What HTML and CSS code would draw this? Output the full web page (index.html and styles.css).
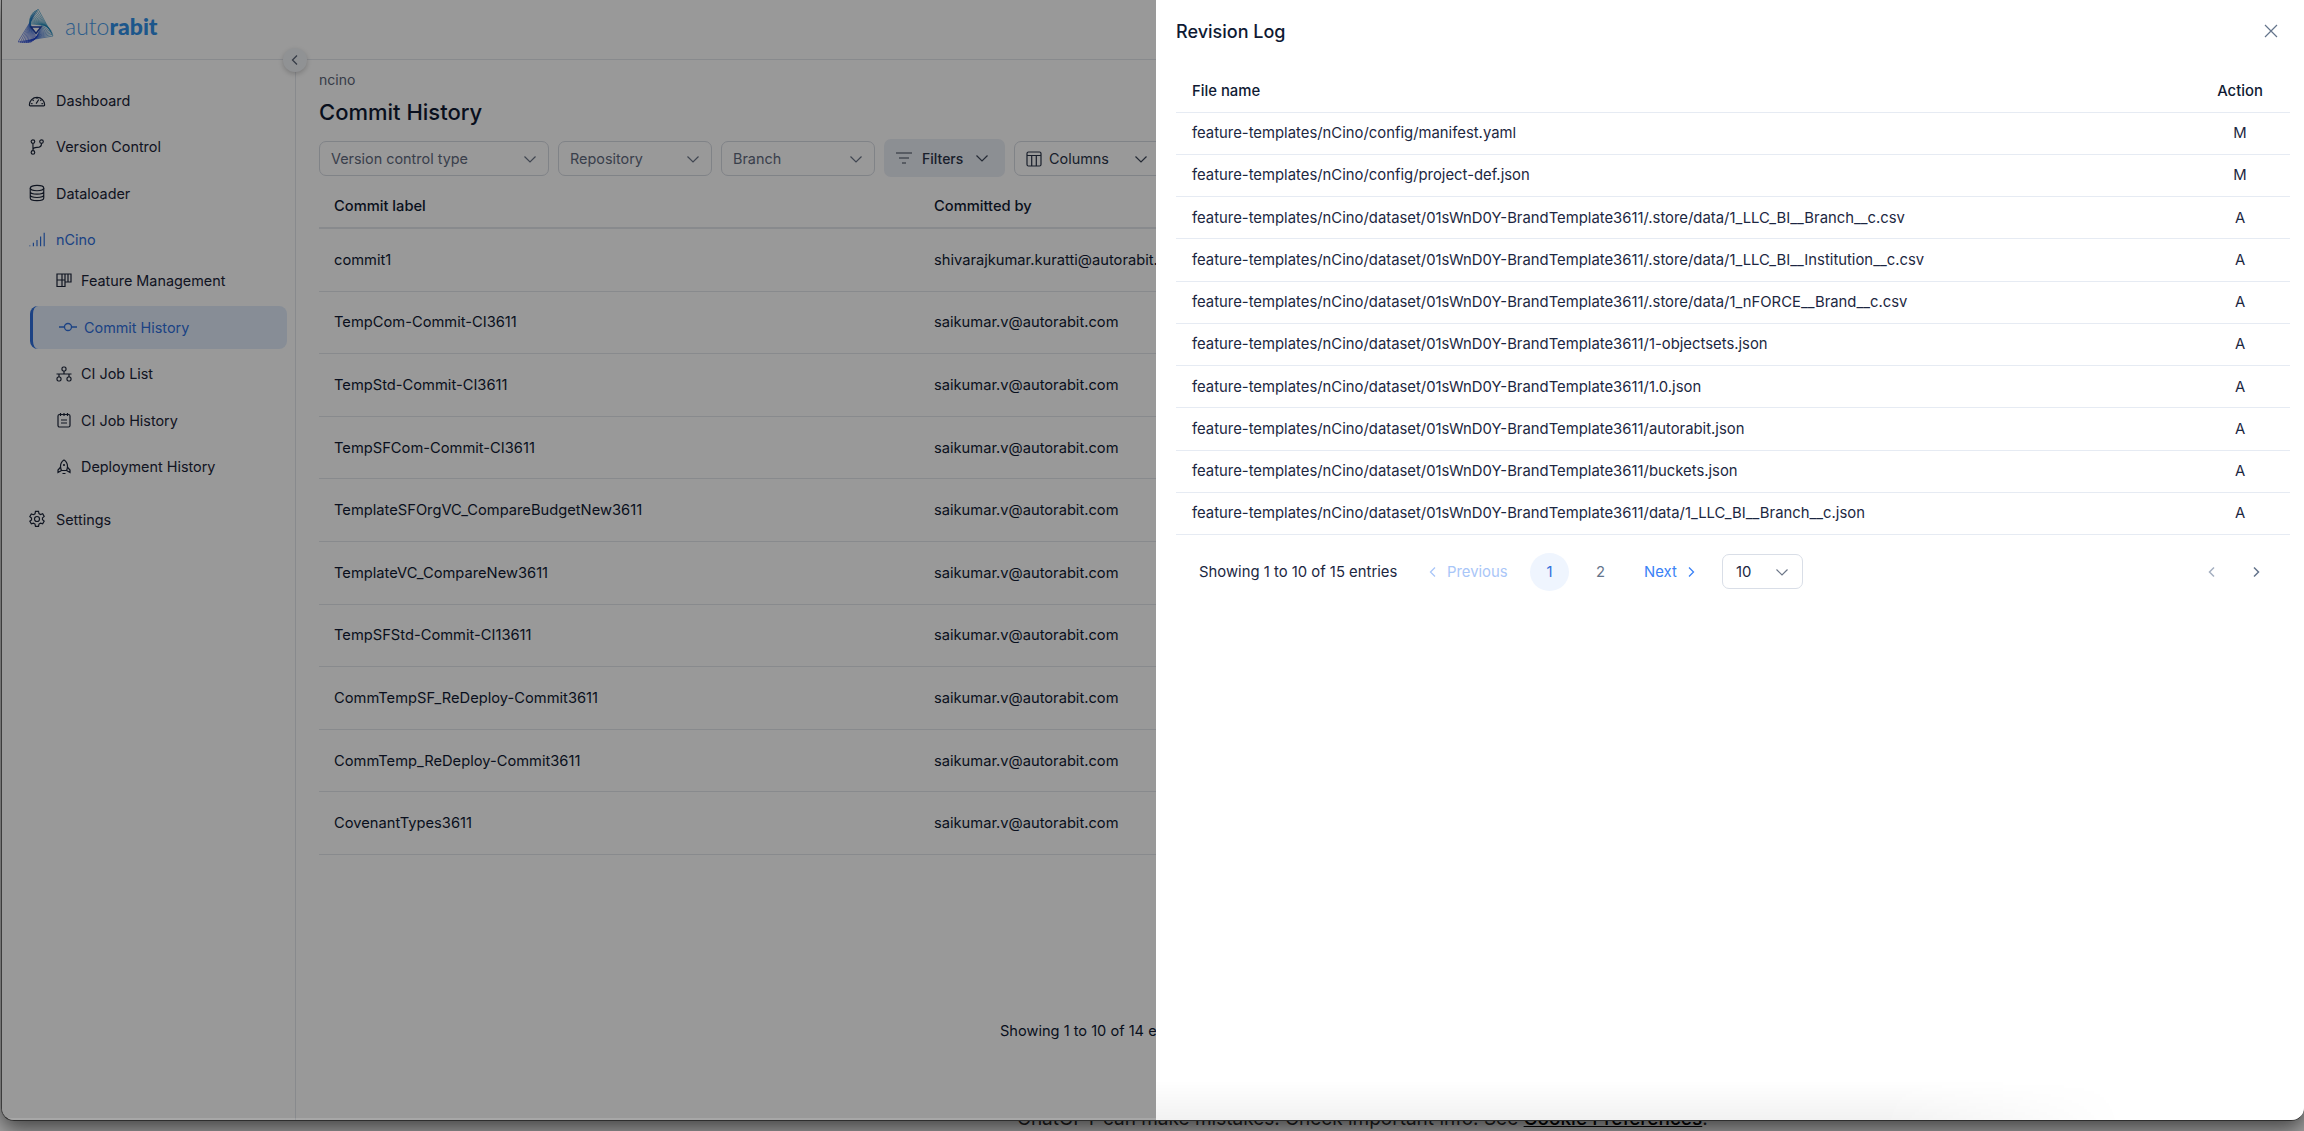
FILE: index.html
```html
<!DOCTYPE html>
<html lang="en">
<head>
<meta charset="utf-8">
<title>Revision Log</title>
<link rel="stylesheet" href="styles.css">
</head>
<body>
<div class="window">
  <div class="app">
    <header class="topbar">
      <div class="logo">
        <svg class="logo-mark" viewBox="-18 -20 36 34" fill="none">
          <defs><linearGradient id="lg" gradientUnits="userSpaceOnUse" x1="-16" y1="8" x2="16" y2="-10"><stop offset="0" stop-color="#1d3fd0"/><stop offset=".55" stop-color="#1d5fc8"/><stop offset="1" stop-color="#12a0a8"/></linearGradient></defs>
          <g class="spiral" stroke="url(#lg)">
            <polygon points="2,-20 17,7 -18,13"/>
            <polygon points="2,-20 17,7 -18,13" transform="rotate(-5) scale(.945)"/>
            <polygon points="2,-20 17,7 -18,13" transform="rotate(-10) scale(.89)"/>
            <polygon points="2,-20 17,7 -18,13" transform="rotate(-15) scale(.835)"/>
            <polygon points="2,-20 17,7 -18,13" transform="rotate(-20) scale(.78)"/>
            <polygon points="2,-20 17,7 -18,13" transform="rotate(-25) scale(.725)"/>
            <polygon points="2,-20 17,7 -18,13" transform="rotate(-30) scale(.67)"/>
            <polygon points="2,-20 17,7 -18,13" transform="rotate(-35) scale(.615)"/>
            <polygon points="2,-20 17,7 -18,13" transform="rotate(-40) scale(.56)"/>
            <polygon points="2,-20 17,7 -18,13" transform="rotate(-45) scale(.505)"/>
            <polygon points="2,-20 17,7 -18,13" transform="rotate(-50) scale(.45)"/>
            <polygon points="2,-20 17,7 -18,13" transform="rotate(-55) scale(.395)"/>
          </g>
          <polygon class="spiral-core" points="-5,-2 5,-2 0,4.500"/>
        </svg>
        <span class="logo-text">auto<b>rabit</b></span>
      </div>
    </header>
    <button class="collapse" aria-label="Collapse"><svg viewBox="0 0 16 16" class="i16" fill="none" stroke="#5b6577" stroke-width="1.3"><path d="M10 3.5 5.5 8l4.5 4.5"/></svg></button>
    <div class="body">
      <aside class="sidebar">
        <nav class="nav">
          <a class="nav-item"><svg class="ic" viewBox="0 0 20 20"><path d="M1.5 15.5a8.5 8.5 0 1 1 17 0 1 1 0 0 1-1 1h-15a1 1 0 0 1-1-1Z"/><path d="M10 7v2M5 9.5l1.3 1.3M15 9.5l-1.3 1.300M3.500 14h1.500M15 14h1.500M9 14l3-4.500"/></svg>Dashboard</a>
          <a class="nav-item"><svg class="ic" viewBox="0 0 20 20"><circle cx="5.500" cy="4" r="2"/><circle cx="5.500" cy="16" r="2"/><circle cx="15" cy="4" r="2"/><path d="M5.500 6v8M15 6c0 3.500-2 4.500-5 4.500-2.500 0-4.500 1-4.500 3"/></svg>Version Control</a>
          <a class="nav-item"><svg class="ic" viewBox="0 0 20 20"><ellipse cx="10" cy="4.500" rx="7.500" ry="3"/><path d="M2.500 4.500v11c0 1.700 3.400 3 7.500 3s7.500-1.300 7.500-3v-11M2.500 8.200c0 1.700 3.400 3 7.500 3s7.500-1.300 7.500-3M2.500 12c0 1.700 3.400 3 7.500 3s7.500-1.300 7.500-3"/></svg>Dataloader</a>
          <a class="nav-item nav-brand"><svg class="ic" viewBox="0 0 20 20"><path d="M2 17v-1M6 17v-4M10 17v-7M14 17V6M18 17V2"/></svg>nCino</a>
          <div class="subnav">
            <a class="sub-item"><svg class="ic-sm" viewBox="0 0 16 16"><path d="M1 2h14v8H9v4.500H1ZM6 2v12.500M1 8h8M9 2v8M12 2v8"/></svg>Feature Management</a>
            <a class="sub-item sub-active"><svg class="ic-commit" viewBox="0 0 20 12"><circle cx="10" cy="6" r="3.500"/><path d="M1 6h5.500M13.500 6H19"/></svg>Commit History</a>
            <a class="sub-item"><svg class="ic-sm" viewBox="0 0 16 16"><rect x="6" y="1" width="4" height="4" rx="1.500"/><rect x="1" y="11" width="4" height="4" rx="1.500"/><rect x="11" y="11" width="4" height="4" rx="1.500"/><path d="M8 5v3M.5 8h15M3 8v3M13 8v3"/></svg>CI Job List</a>
            <a class="sub-item"><svg class="ic-sm" viewBox="0 0 16 16"><rect x="2" y="2.500" width="12" height="12.500" rx="1.500"/><path d="M4.500 1v3M8 1v3M11.500 1v3M5 8h6M5 11h6"/></svg>CI Job History</a>
            <a class="sub-item"><svg class="ic-sm" viewBox="0 0 16 16"><path d="M8 1c2.500 1.500 3.500 4 3.500 6.500 0 1.500-.5 3-1 4h-5c-.5-1-1-2.500-1-4C4.500 5 5.500 2.500 8 1Z"/><path d="M4.700 8 2 11v2.500l3.500-2M11.300 8 14 11v2.500l-3.500-2M6.500 14.500h3"/><circle cx="8" cy="6" r=".5"/></svg>Deployment History</a>
          </div>
          <a class="nav-item nav-last"><svg class="ic" viewBox="0 0 20 20"><path d="M8.300 1.500h3.400l.5 2.500 1.700 1 2.400-.8 1.700 3-1.900 1.600v2l1.900 1.600-1.700 3-2.400-.8-1.700 1-.5 2.500H8.300l-.5-2.500-1.700-1-2.400.8-1.700-3L3.900 11V9L2 7.400l1.700-3 2.400.8 1.700-1Z"/><circle cx="10" cy="10" r="2.800"/></svg>Settings</a>
        </nav>
      </aside>
      <main class="main">
        <div class="crumb">ncino</div>
        <h1 class="page-title">Commit History</h1>
        <div class="filters">
          <div class="select w-vct">Version control type<svg class="chev" viewBox="0 0 14 14"><path d="M1.500 4.500 7 10l5.500-5.500"/></svg></div>
          <div class="select w-repo">Repository<svg class="chev" viewBox="0 0 14 14"><path d="M1.500 4.500 7 10l5.500-5.500"/></svg></div>
          <div class="select w-repo">Branch<svg class="chev" viewBox="0 0 14 14"><path d="M1.500 4.500 7 10l5.500-5.500"/></svg></div>
          <div class="filter-btn"><svg class="ic-filter" viewBox="0 0 16 12"><path d="M0 1h16M3 6h10M6 11h4"/></svg>Filters<svg class="chev dark" viewBox="0 0 14 14"><path d="M1.500 4.500 7 10l5.500-5.500"/></svg></div>
          <div class="col-btn"><svg class="ic-sm" viewBox="0 0 16 16"><rect x="1" y="1" width="14" height="14" rx="1.500"/><path d="M1 4.500h14M5.700 4.500V15M10.300 4.500V15"/></svg>Columns<svg class="chev dark" viewBox="0 0 14 14"><path d="M1.500 4.500 7 10l5.500-5.500"/></svg></div>
        </div>
        <div class="commit-head"><span class="c1">Commit label</span><span>Committed by</span></div>
        <div class="commit-row"><span class="c1">commit1</span><span>shivarajkumar.kuratti@autorabit.com</span></div>
        <div class="commit-row"><span class="c1">TempCom-Commit-CI3611</span><span>saikumar.v@autorabit.com</span></div>
        <div class="commit-row"><span class="c1">TempStd-Commit-CI3611</span><span>saikumar.v@autorabit.com</span></div>
        <div class="commit-row"><span class="c1">TempSFCom-Commit-CI3611</span><span>saikumar.v@autorabit.com</span></div>
        <div class="commit-row"><span class="c1">TemplateSFOrgVC_CompareBudgetNew3611</span><span>saikumar.v@autorabit.com</span></div>
        <div class="commit-row"><span class="c1">TemplateVC_CompareNew3611</span><span>saikumar.v@autorabit.com</span></div>
        <div class="commit-row"><span class="c1">TempSFStd-Commit-CI13611</span><span>saikumar.v@autorabit.com</span></div>
        <div class="commit-row"><span class="c1">CommTempSF_ReDeploy-Commit3611</span><span>saikumar.v@autorabit.com</span></div>
        <div class="commit-row"><span class="c1">CommTemp_ReDeploy-Commit3611</span><span>saikumar.v@autorabit.com</span></div>
        <div class="commit-row"><span class="c1">CovenantTypes3611</span><span>saikumar.v@autorabit.com</span></div>
        <div class="main-foot">Showing 1 to 10 of 14 entries</div>
      </main>
    </div>
  </div>
  <div class="scrim"></div>
  <section class="panel">
    <div class="panel-head">
      <h2 class="panel-title">Revision Log</h2>
      <svg class="close" viewBox="0 0 14 14"><path d="M1 1l12 12M13 1 1 13"/></svg>
    </div>
    <div class="log-row log-head"><span>File name</span><span class="act">Action</span></div>
    <div class="log-row"><span>feature-templates/nCino/config/manifest.yaml</span><span class="act">M</span></div>
    <div class="log-row"><span>feature-templates/nCino/config/project-def.json</span><span class="act">M</span></div>
    <div class="log-row"><span>feature-templates/nCino/dataset/01sWnD0Y-BrandTemplate3611/.store/data/1_LLC_BI__Branch__c.csv</span><span class="act">A</span></div>
    <div class="log-row"><span>feature-templates/nCino/dataset/01sWnD0Y-BrandTemplate3611/.store/data/1_LLC_BI__Institution__c.csv</span><span class="act">A</span></div>
    <div class="log-row"><span>feature-templates/nCino/dataset/01sWnD0Y-BrandTemplate3611/.store/data/1_nFORCE__Brand__c.csv</span><span class="act">A</span></div>
    <div class="log-row"><span>feature-templates/nCino/dataset/01sWnD0Y-BrandTemplate3611/1-objectsets.json</span><span class="act">A</span></div>
    <div class="log-row"><span>feature-templates/nCino/dataset/01sWnD0Y-BrandTemplate3611/1.0.json</span><span class="act">A</span></div>
    <div class="log-row"><span>feature-templates/nCino/dataset/01sWnD0Y-BrandTemplate3611/autorabit.json</span><span class="act">A</span></div>
    <div class="log-row"><span>feature-templates/nCino/dataset/01sWnD0Y-BrandTemplate3611/buckets.json</span><span class="act">A</span></div>
    <div class="log-row"><span>feature-templates/nCino/dataset/01sWnD0Y-BrandTemplate3611/data/1_LLC_BI__Branch__c.json</span><span class="act">A</span></div>
    <div class="pager">
      <span class="pg-info">Showing 1 to 10 of 15 entries</span>
      <span class="pg-prev"><svg class="pg-ch" viewBox="0 0 8 12"><path d="M6 1.500 1.500 6 6 10.500"/></svg>Previous</span>
      <span class="pg-num pg-cur">1</span>
      <span class="pg-num">2</span>
      <span class="pg-next">Next<svg class="pg-ch" viewBox="0 0 8 12"><path d="M2 1.500 6.500 6 2 10.500"/></svg></span>
      <div class="pg-size">10<svg class="chev" viewBox="0 0 14 14"><path d="M1.500 4.500 7 10l5.500-5.500"/></svg></div>
      <span class="pg-arrows">
        <svg class="arr arr-off" viewBox="0 0 8 12"><path d="M6 1.500 1.500 6 6 10.500"/></svg>
        <svg class="arr" viewBox="0 0 8 12"><path d="M2 1.500 6.500 6 2 10.500"/></svg>
      </span>
    </div>
  </section>
</div>
<p class="note">ChatGPT can make mistakes. Check important info. See <u>Cookie Preferences</u>.</p>
</body>
</html>
```
FILE: styles.css
```css
* { box-sizing: border-box; }
html, body { margin: 0; height: 1131px; overflow: hidden; }
body { background: #a4a4a4; font-family: Inter, "Liberation Sans", sans-serif; color: #0f1a33; font-size: 14px; }

.window { position: relative; z-index: 1; height: 1121px; margin-left: 1px; border-left: 1px solid #3c3c3c; border-bottom: 1px solid #2e2e2e; border-radius: 0 0 13px 13px; overflow: hidden; background: #fff; box-shadow: 0 8px 22px rgba(0,0,0,.6); }
.app { position: relative; height: 100%; display: flex; flex-direction: column; }

.topbar { height: 60px; flex: none; border-bottom: 1px solid #e3e6ec; padding: 9px 0 0 16px; }
.logo { display: flex; align-items: center; gap: 11px; height: 34px; }
.logo-mark { width: 36px; height: 34px; flex: none; }
.spiral polygon { stroke-width: .55; vector-effect: non-scaling-stroke; stroke-linejoin: miter; }
.spiral-core { fill: #fff; stroke: #1d3fa8; stroke-width: 1.400; }
.logo-text { font-family: Lato, sans-serif; font-weight: 300; font-size: 23px; color: #4a9bea; }
.logo-text b { font-weight: 900; color: #3090e8; }

.collapse { position: absolute; left: 281px; top: 48px; width: 24px; height: 24px; padding: 4px; border: 0; border-radius: 50%; background: #f1f3f7; box-shadow: 0 2px 5px rgba(0,0,0,.2); z-index: 2; }
.i16 { display: block; width: 16px; height: 16px; }

.body { flex: 1; display: flex; min-height: 0; }
.sidebar { width: 294px; flex: none; border-right: 1px solid #e3e6ec; padding: 17px 0 0 26px; font-size: 14.400px; }
.nav { display: flex; flex-direction: column; }
.nav-item { display: flex; align-items: center; gap: 10px; height: 46.500px; color: #1b2438; }
.nav-brand { color: #2f6fdc; }
.nav-last { margin-top: 6px; height: 46px; }
.ic { width: 18px; height: 18px; flex: none; fill: none; stroke: currentColor; stroke-width: 1.300; }
.ic-sm { width: 16px; height: 16px; flex: none; fill: none; stroke: currentColor; stroke-width: 1.200; }
.ic-commit { width: 20px; height: 12px; flex: none; fill: none; stroke: currentColor; stroke-width: 1.300; }
.subnav { display: flex; flex-direction: column; margin-top: -6px; }
.sub-item { display: flex; align-items: center; gap: 9px; height: 46.500px; padding-left: 28px; color: #1b2438; }
.sub-active { margin: 2px 0 2px 2px; height: 43px; width: 257px; padding-left: 25px; gap: 6px; border-left: 3px solid #2f6fdc; border-radius: 8px; background: #e1ecfb; color: #2f6fdc; }

.main { flex: 1; min-width: 0; padding: 11px 0 0 23px; overflow: hidden; font-size: 14.700px; }
.crumb { color: #5a6478; line-height: 17px; font-size: 14px; }
.page-title { margin: 10px 0 0; font-size: 22px; font-weight: 500; line-height: 28px; color: #0f1a33; }
.filters { display: flex; gap: 9px; margin-top: 15px; height: 35px; width: 1000px; font-size: 14.400px; }
.select, .col-btn { display: flex; align-items: center; justify-content: space-between; height: 35px; padding: 0 11px; border: 1px solid #d6dae2; border-radius: 7px; color: #5f6a7e; flex: none; }
.w-vct { width: 230px; }
.w-repo { width: 154px; }
.filter-btn { display: flex; align-items: center; gap: 10px; height: 38px; margin-top: -2px; width: 121px; padding: 0 12px; border-radius: 7px; background: #eaeef5; color: #2a3448; font-weight: 500; flex: none; font-size: 14px; }
.filter-btn .chev { margin-left: 2px; }
.col-btn { width: 160px; color: #2a3448; justify-content: flex-start; gap: 7px; }
.col-btn .chev { margin-left: 18px; }
.chev { width: 14px; height: 14px; flex: none; fill: none; stroke: #6c7688; stroke-width: 1.200; }
.chev.dark { stroke: #3c4658; }
.ic-filter { width: 16px; height: 12px; flex: none; fill: none; stroke: #3c4658; stroke-width: 1.200; }

.commit-head, .commit-row { display: flex; align-items: center; width: 1200px; padding-left: 15px; border-bottom: 1px solid #e3e6ec; }
.commit-head { height: 53px; padding-top: 8px; font-weight: 500; border-bottom-width: 2px; }
.commit-row { height: 62.600px; }
.c1 { width: 600px; flex: none; }
.main-foot { margin: 167px 0 0 681px; white-space: nowrap; font-size: 14.600px; }

.scrim { position: absolute; inset: 0; background: rgba(0,0,0,.4); z-index: 3; box-shadow: inset 0 -2px 0 rgba(255,255,255,.14); }

.panel { position: absolute; z-index: 4; left: 1154px; right: 0; top: 0; bottom: 0; background: #fff; padding: 0 14px 0 20px; font-size: 14.850px; }
.panel::after { content: ""; position: absolute; left: 0; right: 180px; bottom: 0; height: 40px; background: linear-gradient(to bottom, rgba(0,0,0,0), rgba(0,0,0,.05)); -webkit-mask-image: linear-gradient(to right, #000 75%, transparent); mask-image: linear-gradient(to right, #000 75%, transparent); }
.panel-head { display: flex; align-items: center; justify-content: space-between; height: 62px; padding-right: 12px; }
.panel-title { margin: 0; font-size: 18px; font-weight: 500; color: #0f1a33; }
.close { width: 14px; height: 14px; fill: none; stroke: #64748b; stroke-width: 1.200; }
.log-row { display: flex; align-items: center; justify-content: space-between; height: 42.250px; padding: 0 16px; border-bottom: 1px solid #e6ebf3; color: #1c2742; }
.log-head { height: 50.500px; padding-top: 8px; font-weight: 500; color: #0f1a33; }
.act { width: 60px; margin-right: 4px; text-align: center; }

.pager { display: flex; align-items: center; height: 39px; margin-top: 17px; padding-left: 23px; }
.pg-info { width: 232px; flex: none; color: #1c2742; white-space: nowrap; }
.pg-prev { display: flex; align-items: center; gap: 10px; width: 99px; margin-left: -2px; margin-right: 2px; flex: none; color: #a9c6f8; }
.pg-next { display: flex; align-items: center; gap: 10px; width: 78px; margin-left: 12px; flex: none; color: #3b82f6; }
.pg-ch { width: 8px; height: 12px; flex: none; fill: none; stroke: currentColor; stroke-width: 1.300; }
.pg-num { width: 39px; height: 38px; border-radius: 50%; display: flex; align-items: center; justify-content: center; margin-right: 12px; color: #64748b; flex: none; }
.pg-cur { background: #eff5fe; color: #2f6fdc; }
.pg-size { display: flex; align-items: center; justify-content: space-between; width: 81px; height: 35px; padding: 0 13px; border: 1px solid #d9dee7; border-radius: 7px; color: #1c2742; flex: none; }
.pg-arrows { margin-left: auto; display: flex; gap: 36px; margin-right: 30px; }
.arr { width: 8px; height: 12px; fill: none; stroke: #64748b; stroke-width: 1.500; }
.arr-off { stroke: #a4afc0; }

.note { margin: -13px 0 0 1017px; font-size: 19px; line-height: 22px; color: #1e1e1e; white-space: nowrap; }
.note u { color: #050505; font-weight: 500; }
```
